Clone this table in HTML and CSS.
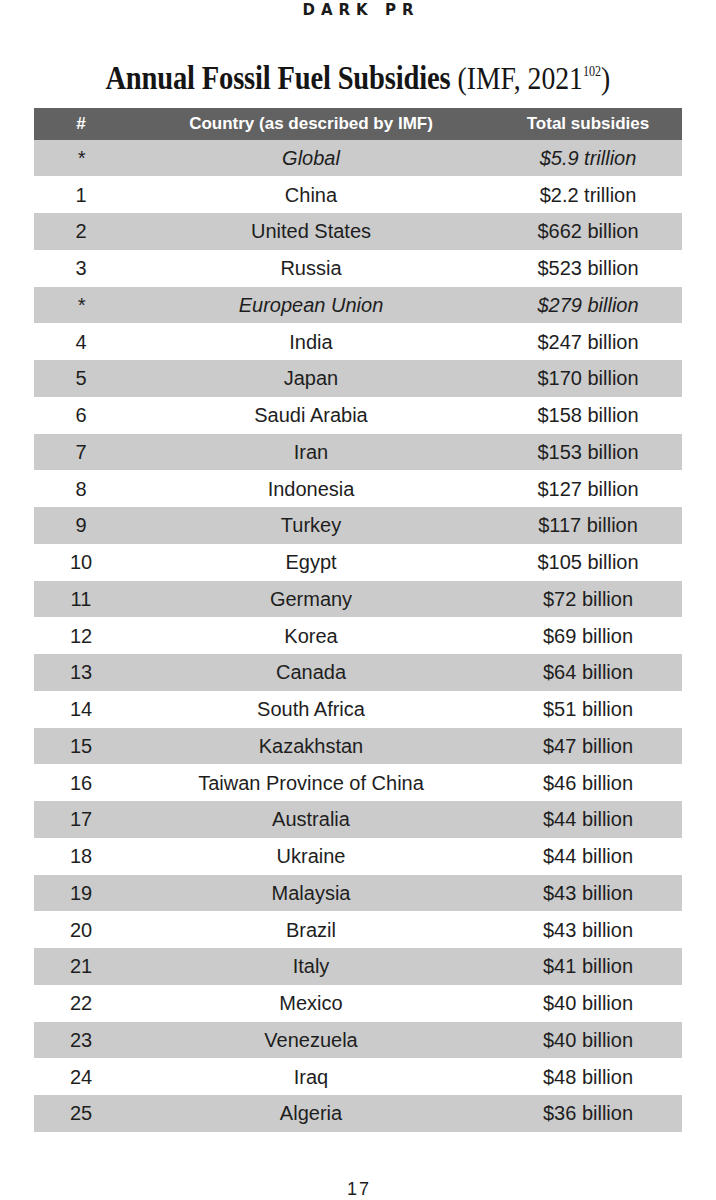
FILE: index.html
```html
<!DOCTYPE html>
<html lang="en">
<head>
<meta charset="utf-8">
<title>Dark PR – Annual Fossil Fuel Subsidies</title>
<link rel="stylesheet" href="styles.css">
</head>
<body>
<div class="page">
  <header class="running-head">DARK PR</header>
  <h1 class="title"><span class="title-inner"><span class="title-main">Annual Fossil Fuel Subsidies</span> <span class="title-src">(IMF, 2021<sup class="ref">102</sup>)</span></span></h1>
  <table class="subsidies">
    <thead>
      <tr><th class="c-rank">#</th><th class="c-country">Country (as described by IMF)</th><th class="c-total">Total subsidies</th></tr>
    </thead>
    <tbody>
      <tr class="agg"><td>*</td><td>Global</td><td>$5.9 trillion</td></tr>
      <tr><td>1</td><td>China</td><td>$2.2 trillion</td></tr>
      <tr><td>2</td><td>United States</td><td>$662 billion</td></tr>
      <tr><td>3</td><td>Russia</td><td>$523 billion</td></tr>
      <tr class="agg"><td>*</td><td>European Union</td><td>$279 billion</td></tr>
      <tr><td>4</td><td>India</td><td>$247 billion</td></tr>
      <tr><td>5</td><td>Japan</td><td>$170 billion</td></tr>
      <tr><td>6</td><td>Saudi Arabia</td><td>$158 billion</td></tr>
      <tr><td>7</td><td>Iran</td><td>$153 billion</td></tr>
      <tr><td>8</td><td>Indonesia</td><td>$127 billion</td></tr>
      <tr><td>9</td><td>Turkey</td><td>$117 billion</td></tr>
      <tr><td>10</td><td>Egypt</td><td>$105 billion</td></tr>
      <tr><td>11</td><td>Germany</td><td>$72 billion</td></tr>
      <tr><td>12</td><td>Korea</td><td>$69 billion</td></tr>
      <tr><td>13</td><td>Canada</td><td>$64 billion</td></tr>
      <tr><td>14</td><td>South Africa</td><td>$51 billion</td></tr>
      <tr><td>15</td><td>Kazakhstan</td><td>$47 billion</td></tr>
      <tr><td>16</td><td>Taiwan Province of China</td><td>$46 billion</td></tr>
      <tr><td>17</td><td>Australia</td><td>$44 billion</td></tr>
      <tr><td>18</td><td>Ukraine</td><td>$44 billion</td></tr>
      <tr><td>19</td><td>Malaysia</td><td>$43 billion</td></tr>
      <tr><td>20</td><td>Brazil</td><td>$43 billion</td></tr>
      <tr><td>21</td><td>Italy</td><td>$41 billion</td></tr>
      <tr><td>22</td><td>Mexico</td><td>$40 billion</td></tr>
      <tr><td>23</td><td>Venezuela</td><td>$40 billion</td></tr>
      <tr><td>24</td><td>Iraq</td><td>$48 billion</td></tr>
      <tr><td>25</td><td>Algeria</td><td>$36 billion</td></tr>
    </tbody>
  </table>
  <footer class="folio">17</footer>
</div>
</body>
</html>
```
FILE: styles.css
```css
html, body {
  margin: 0;
  padding: 0;
  background: #ffffff;
}

.page {
  width: 716px;
  font-family: "Liberation Sans", Arial, sans-serif;
  color: #1e1e1e;
}

.running-head {
  padding-top: 2px;
  padding-left: 6px;
  text-align: center;
  font-family: "DejaVu Sans", "Liberation Sans", sans-serif;
  font-weight: 700;
  font-size: 15px;
  line-height: 17px;
  letter-spacing: 6px;
  color: #1a1a1a;
}

.title {
  margin: 39px 0 0 0;
  height: 50px;
  text-align: center;
  font-family: "Liberation Serif", "Times New Roman", serif;
  font-size: 33px;
  line-height: 40px;
  font-weight: 400;
  color: #151515;
  white-space: nowrap;
}

.title-inner {
  display: inline-block;
  transform: scaleX(0.865);
  transform-origin: center;
}

.title-main {
  font-weight: 700;
  letter-spacing: -0.2px;
}

.title-src {
  font-weight: 400;
  font-size: 32px;
}

.ref {
  font-size: 14px;
  vertical-align: 13px;
  line-height: 0;
}

.subsidies {
  width: 648px;
  margin: 0 auto;
  border-collapse: collapse;
  border-spacing: 0;
  table-layout: fixed;
}

.subsidies th,
.subsidies td {
  padding: 0;
  text-align: center;
  white-space: nowrap;
}

.c-rank { width: 94px; }
.c-country { width: 366px; }
.c-total { width: 188px; }

.subsidies thead tr {
  height: 31.5px;
  background: #626262;
}

.subsidies th {
  color: #ffffff;
  font-weight: 700;
  font-size: 17px;
  line-height: 20px;
  padding-top: 1px;
}

.subsidies tbody tr {
  height: 36.75px;
}

.subsidies tbody tr:nth-child(odd) {
  background: #cbcbcb;
}

.subsidies td {
  font-size: 20px;
  line-height: 22px;
  color: #1e1e1e;
}

.subsidies tr.agg td {
  font-style: italic;
}

.folio {
  margin-top: 47px;
  text-align: center;
  font-size: 18px;
  line-height: 20px;
  letter-spacing: 2px;
  padding-left: 2px;
  color: #1e1e1e;
}
```
